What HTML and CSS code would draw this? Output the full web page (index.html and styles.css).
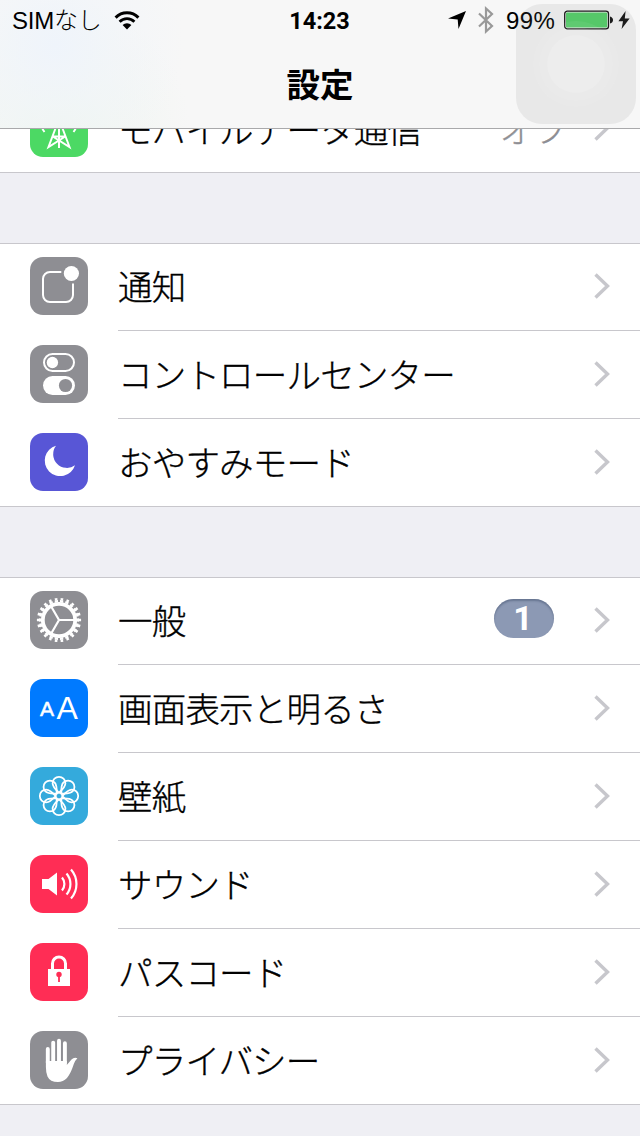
FILE: index.html
```html
<!DOCTYPE html>
<html lang="ja">
<head>
    <meta charset="UTF-8">
    <meta name="viewport" content="width=device-width, initial-scale=1.0">
    <title>設定</title>
    <link rel="stylesheet" href="styles.css">
</head>
<body>

<div class="screen">
    <header class="header">
        <div class="status-bar">
            <div class="status-left">
                <span class="carrier">SIMなし</span>
                <svg class="wifi" width="26" height="19" viewBox="0 0 26 19">
                    <path d="M1.6 6.6 A16 16 0 0 1 24.4 6.6" fill="none" stroke="#000" stroke-width="3"/>
                    <path d="M5.6 10.8 A10.4 10.4 0 0 1 20.4 10.8" fill="none" stroke="#000" stroke-width="2.8"/>
                    <path d="M8.6 14 A6.2 6.2 0 0 1 17.4 14 L13 18.4 Z" fill="#000"/>
                </svg>
            </div>
            <div class="clock">14:23</div>
            <div class="status-right">
                <svg class="location" width="18" height="18" viewBox="0 0 18 18">
                    <path d="M18 0 L10.5 18 L9.7 8.4 L0 7.4 Z" fill="#000"/>
                </svg>
                <svg class="bluetooth" width="16" height="28" viewBox="0 0 16 28">
                    <path d="M1 7.5 L14 20 L8 25.5 V2.5 L14 8 L1 20.5" fill="none" stroke="#999" stroke-width="2.2"/>
                </svg>
                <span class="percent">99%</span>
                <svg class="battery" width="50" height="20" viewBox="0 0 50 20">
                    <rect x="0.7" y="1.2" width="43.8" height="17.6" rx="2.6" fill="none" stroke="#111" stroke-width="1.3"/>
                    <rect x="2" y="2.5" width="41.2" height="15" rx="1" fill="#53d168"/>
                    <path d="M46 6.5 Q49 7.5 49 10 T46 13.5 Z" fill="#111"/>
                </svg>
                <svg class="bolt" width="12" height="18" viewBox="0 0 12 18">
                    <path d="M7.6 0 L0.4 10.2 H5 L3.6 18 L11.6 7.4 H6.8 Z" fill="#111"/>
                </svg>
            </div>
        </div>
        <h1 class="title">設定</h1>
    </header>

    <div class="touch-button">
        <div class="ring outer"><div class="ring middle"><div class="ring inner"></div></div></div>
    </div>

    <main class="list">
        <section class="group">
            <div class="row scrolled">
                <svg class="icon green" viewBox="0 0 58 58">
                    <g fill="none" stroke="#fff" stroke-width="2">
                        <path d="M27.5 24 L18.5 48 L36 37 M30.5 24 L39.5 48 L22 37 M29 20 V49 M23 37.5 H35"/>
                        <path d="M14.5 33 A17 17 0 0 1 14.5 12 M43.5 33 A17 17 0 0 0 43.5 12"/>
                    </g>
                </svg>
                <div class="cell">
                    <span class="label">モバイルデータ通信</span>
                    <span class="value">オフ</span>
                    <svg class="chevron" viewBox="0 0 16 26"><path d="M1.5 1.5 L13.5 13 L1.5 24.5"/></svg>
                </div>
            </div>
        </section>

        <section class="group">
            <div class="row">
                <svg class="icon gray" viewBox="0 0 58 58">
                    <path d="M31.3 15 H20 A7 7 0 0 0 13 22 V38 A7 7 0 0 0 20 45 H36 A7 7 0 0 0 43 38 V26.6" fill="none" stroke="#fff" stroke-width="2"/>
                    <circle cx="41.4" cy="16.5" r="7.6" fill="#fff"/>
                </svg>
                <div class="cell">
                    <span class="label">通知</span>
                    <svg class="chevron" viewBox="0 0 16 26"><path d="M1.5 1.5 L13.5 13 L1.5 24.5"/></svg>
                </div>
            </div>
            <div class="row">
                <svg class="icon gray" viewBox="0 0 58 58">
                    <rect x="14" y="9" width="30" height="17" rx="8.5" fill="none" stroke="#fff" stroke-width="2"/>
                    <circle cx="22.4" cy="17.5" r="5.7" fill="#fff"/>
                    <rect x="13" y="31" width="32" height="19" rx="9.5" fill="#fff"/>
                    <circle cx="35.5" cy="40.5" r="6.6" fill="#8e8e93"/>
                </svg>
                <div class="cell">
                    <span class="label">コントロールセンター</span>
                    <svg class="chevron" viewBox="0 0 16 26"><path d="M1.5 1.5 L13.5 13 L1.5 24.5"/></svg>
                </div>
            </div>
            <div class="row">
                <svg class="icon purple" viewBox="0 0 58 58">
                    <path d="M26 12.7 A15.5 15.5 0 1 0 45 32.3 A13.8 13.8 0 0 1 26 12.7 Z" fill="#fff"/>
                </svg>
                <div class="cell">
                    <span class="label">おやすみモード</span>
                    <svg class="chevron" viewBox="0 0 16 26"><path d="M1.5 1.5 L13.5 13 L1.5 24.5"/></svg>
                </div>
            </div>
        </section>

        <section class="group">
            <div class="row">
                <svg class="icon gray" viewBox="0 0 58 58">
                    <g fill="none" stroke="#fff">
                        <circle cx="29" cy="29" r="16.2" stroke-width="3.8"/>
                        <circle cx="29" cy="29" r="18.9" stroke-width="2.4" pathLength="22" stroke-dasharray="0.62 0.38" stroke-dashoffset="0.31"/>
                        <circle cx="29" cy="29" r="20.9" stroke-width="2.4" pathLength="22" stroke-dasharray="0.44 0.56" stroke-dashoffset="0.22"/>
                        <path d="M29 29 H44 M29 29 L21.5 16 M29 29 L21.5 42" stroke-width="2.2"/>
                    </g>
                </svg>
                <div class="cell">
                    <span class="label">一般</span>
                    <span class="badge">1</span>
                    <svg class="chevron" viewBox="0 0 16 26"><path d="M1.5 1.5 L13.5 13 L1.5 24.5"/></svg>
                </div>
            </div>
            <div class="row">
                <svg class="icon blue" viewBox="0 0 58 58">
                    <text x="10" y="37" class="small-a">A</text>
                    <text x="26.5" y="40" class="big-a">A</text>
                </svg>
                <div class="cell">
                    <span class="label">画面表示と明るさ</span>
                    <svg class="chevron" viewBox="0 0 16 26"><path d="M1.5 1.5 L13.5 13 L1.5 24.5"/></svg>
                </div>
            </div>
            <div class="row">
                <svg class="icon sky" viewBox="0 0 58 58">
                    <g fill="none" stroke="#fff" stroke-width="1.8">
                        <path id="petal" d="M29 25.6 C26 23 22.6 20 22.6 16.2 A6.4 6.4 0 0 1 35.4 16.2 C35.4 20 32 23 29 25.6 Z"/>
                        <use href="#petal" transform="rotate(45 29 29)"/>
                        <use href="#petal" transform="rotate(90 29 29)"/>
                        <use href="#petal" transform="rotate(135 29 29)"/>
                        <use href="#petal" transform="rotate(180 29 29)"/>
                        <use href="#petal" transform="rotate(225 29 29)"/>
                        <use href="#petal" transform="rotate(270 29 29)"/>
                        <use href="#petal" transform="rotate(315 29 29)"/>
                        <circle cx="29" cy="29" r="3.4"/>
                    </g>
                </svg>
                <div class="cell">
                    <span class="label">壁紙</span>
                    <svg class="chevron" viewBox="0 0 16 26"><path d="M1.5 1.5 L13.5 13 L1.5 24.5"/></svg>
                </div>
            </div>
            <div class="row">
                <svg class="icon red" viewBox="0 0 58 58">
                    <path d="M12 24 H18.5 L27 17.5 V40.5 L18.5 34 H12 Z" fill="#fff"/>
                    <path d="M32 22.5 A10 10 0 0 1 32 35.5 M36.5 18.5 A16 16 0 0 1 36.5 39.5 M41 14.5 A22 22 0 0 1 41 43.5" fill="none" stroke="#fff" stroke-width="2.2"/>
                </svg>
                <div class="cell">
                    <span class="label">サウンド</span>
                    <svg class="chevron" viewBox="0 0 16 26"><path d="M1.5 1.5 L13.5 13 L1.5 24.5"/></svg>
                </div>
            </div>
            <div class="row">
                <svg class="icon red" viewBox="0 0 58 58">
                    <path d="M22.5 27 V20.5 A6.5 6.5 0 0 1 35.5 20.5 V27" fill="none" stroke="#fff" stroke-width="3"/>
                    <rect x="18" y="26" width="22" height="17" fill="#fff"/>
                    <circle cx="29" cy="31.5" r="2.7" fill="#ff2d55"/>
                    <rect x="28.1" y="32" width="1.8" height="7" fill="#ff2d55"/>
                </svg>
                <div class="cell">
                    <span class="label">パスコード</span>
                    <svg class="chevron" viewBox="0 0 16 26"><path d="M1.5 1.5 L13.5 13 L1.5 24.5"/></svg>
                </div>
            </div>
            <div class="row">
                <svg class="icon gray" viewBox="0 0 58 58">
                    <path d="M17.8 32 V18 M23.2 32 V11.6 M29 32 V9.8 M34.9 32 V12.2" fill="none" stroke="#fff" stroke-width="3.9" stroke-linecap="round"/>
                    <path d="M15.9 30 H36.8 V34 L41.5 28.5 Q44 26 47.4 27.2 Q45 29.5 43.8 33 C41.5 40 39.5 44 37 47 Q33 51 28 51 Q20 51 17.5 45.5 Q15.9 42 15.9 36 Z" fill="#fff"/>
                </svg>
                <div class="cell">
                    <span class="label">プライバシー</span>
                    <svg class="chevron" viewBox="0 0 16 26"><path d="M1.5 1.5 L13.5 13 L1.5 24.5"/></svg>
                </div>
            </div>
        </section>
    </main>
</div>

</body>
</html>
```
FILE: styles.css
```css
/* General styling */
body {
    font-family: "Liberation Sans", "Noto Sans CJK JP", sans-serif;
    background-color: #efeff4;
    color: #000;
    margin: 0;
}

.screen {
    position: relative;
    width: 640px;
    height: 1136px;
    overflow: hidden;
}

/* Header lies over the scrolled list */
.header {
    position: absolute;
    top: 0;
    left: 0;
    z-index: 1;
    box-sizing: border-box;
    width: 640px;
    height: 129px;
    background: radial-gradient(circle at 55px 45px, #eff4fb 0, rgba(241, 245, 250, 0.6) 60px, rgba(247, 247, 247, 0) 130px),
        radial-gradient(circle at 60px 129px, #eef5ef 0, rgba(247, 247, 247, 0) 130px),
        #f7f7f7;
    border-bottom: 1px solid #a9a9ab;
}

.status-bar {
    display: grid;
    grid-template-columns: 1fr auto 1fr;
    align-items: center;
    height: 40px;
    padding: 0 10px;
    font-size: 24px;
    line-height: 28px;
}

.status-left,
.status-right {
    display: flex;
    align-items: center;
}

.status-right {
    justify-content: flex-end;
}

.carrier {
    margin: 1px 0 0 2px;
    font-weight: 300;
    letter-spacing: -0.2px;
}

.wifi {
    margin-left: 12px;
}

.clock {
    margin: 1px 1px 0 0;
    font-family: Roboto, "Liberation Sans", sans-serif;
    font-weight: 700;
    font-size: 23.5px;
}

.bluetooth {
    margin: 0 12px 0 12px;
}

.percent {
    width: 50px;
    margin: 1px 8px 0 0;
    letter-spacing: 0.4px;
}

.bolt {
    margin-left: 4px;
}

.title {
    margin: 22px 0 0;
    font-family: "Noto Sans CJK JP", sans-serif;
    font-size: 33.5px;
    font-weight: 700;
    line-height: 42px;
    text-align: center;
}

/* Floating touch button */
.touch-button {
    position: absolute;
    top: 4px;
    left: 516px;
    z-index: 2;
    display: flex;
    justify-content: center;
    align-items: center;
    width: 120px;
    height: 120px;
    border-radius: 26px;
    background: rgba(120, 120, 120, 0.11);
}

.ring {
    display: flex;
    justify-content: center;
    align-items: center;
    border-radius: 50%;
    background: rgba(255, 255, 255, 0.06);
}

.outer {
    width: 86px;
    height: 86px;
}

.middle {
    width: 74px;
    height: 74px;
}

.ring.inner {
    width: 58px;
    height: 58px;
    background: rgba(255, 255, 255, 0.14);
}

/* Settings list */
.list {
    padding-top: 85px;
}

.group {
    margin-bottom: 70px;
    background: linear-gradient(#c8c7cc, #c8c7cc) top / 100% 1px no-repeat #fff;
    border-bottom: 1px solid #c8c7cc;
}

.row {
    display: flex;
    height: 88px;
    padding-left: 30px;
}

.row:last-child {
    height: 87px;
}

.icon {
    width: 58px;
    height: 58px;
    margin: 14px 30px 0 0;
    border-radius: 13px;
}

.gray { background: #8e8e93; }
.green { background: #4cd964; }
.purple { background: #5856d6; }
.blue { background: #007aff; }
.sky { background: #34aadc; }
.red { background: #ff2d55; }

.cell {
    box-sizing: border-box;
    display: flex;
    flex: 1;
    align-items: center;
    padding: 0 30px 2px 0;
    border-bottom: 1px solid #c8c7cc;
}

.row:last-child .cell {
    border-bottom: none;
}

.label,
.value {
    margin-bottom: 2px;
    font-family: "Noto Sans CJK JP", sans-serif;
    font-size: 34.5px;
    font-weight: 300;
    line-height: 40px;
    letter-spacing: -0.8px;
    -webkit-text-stroke: 0.35px currentColor;
}

.label {
    flex: 1;
}

.value {
    margin-right: 27px;
    color: #8e8e93;
}

.scrolled .label,
.scrolled .value {
    margin-bottom: 0;
}

.chevron {
    width: 16px;
    height: 26px;
    fill: none;
    stroke: #c7c7cc;
    stroke-width: 3.4;
}

.badge {
    width: 60px;
    height: 39px;
    margin: 0 40px 3px 0;
    border-radius: 20px;
    background: #8c99b4;
    box-shadow: inset 0 2px 2px rgba(60, 75, 105, 0.45);
    color: #fff;
    font-family: Roboto, "Liberation Sans", sans-serif;
    font-size: 34px;
    font-weight: bold;
    line-height: 38px;
    text-align: center;
    text-indent: -2px;
}

/* Letters of the display icon */
.small-a,
.big-a {
    fill: #fff;
    font-family: "Liberation Sans", sans-serif;
}

.small-a {
    font-size: 21px;
    stroke: #fff;
    stroke-width: 0.5px;
}

.big-a {
    font-size: 32px;
}
```
